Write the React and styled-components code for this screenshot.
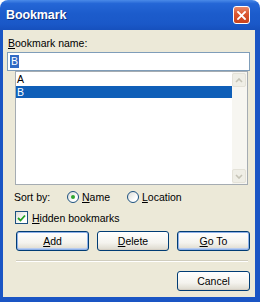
import styled, { createGlobalStyle } from "styled-components";

const GlobalStyle = createGlobalStyle`
  html, body { margin: 0; padding: 0; background: #ffffff; }
  body { font-family: "Liberation Sans", Arial, sans-serif; font-size: 10.5px; color: #000; }
`;

const Window = styled.div`
  width: 260px;
  height: 302px;
  display: flex;
  flex-direction: column;
`;

const TitleBar = styled.div`
  height: 30px;
  flex-shrink: 0;
  display: flex;
  align-items: center;
  justify-content: space-between;
  padding: 0 10px 0 6px;
  box-sizing: border-box;
  border-radius: 8px 8px 0 0;
  background: linear-gradient(180deg, #4a8ae8 0%, #2466d6 12%, #1c5ccc 45%, #1a58c8 80%, #1650bd 100%);
`;

const Title = styled.span`
  color: #fff;
  font-weight: bold;
  font-size: 12.5px;
  letter-spacing: -0.1px;
  text-shadow: 1px 1px 0 #0b2f7c;
`;

const CloseButton = styled.div`
  width: 17px;
  height: 18px;
  box-sizing: border-box;
  border: 1px solid #fff;
  border-radius: 3px;
  background: linear-gradient(180deg, #e98a6a 0%, #d9552f 45%, #c8411c 100%);
  display: flex;
  align-items: center;
  justify-content: center;
`;

const Body = styled.div`
  flex: 1;
  display: flex;
  flex-direction: column;
  background: #ece9d8;
  border-left: 3px solid #1a55c4;
  border-right: 5px solid #1a55c4;
  border-bottom: 5px solid #1a55c4;
  padding: 7px 5px 0 4px;
`;

const Label = styled.div`
  line-height: 13px;
  height: 13px;
  padding-left: 1px;
`;

const U = styled.span`
  text-decoration: underline;
  text-underline-offset: 1px;
`;

const NameInput = styled.div`
  margin-top: 2px;
  height: 19px;
  box-sizing: border-box;
  border: 1px solid #7f9db9;
  background: #fff;
  display: flex;
  align-items: center;
  padding-left: 2px;
`;

const Selected = styled.span`
  background: #316ac5;
  color: #fff;
  padding: 0 1px;
  line-height: 13px;
`;

const List = styled.div`
  margin: 0 2px 0 8px;
  height: 114px;
  box-sizing: border-box;
  border: 1px solid #a5acb2;
  background: #fff;
  display: flex;
`;

const Items = styled.div`
  flex: 1;
  padding-top: 1px;
`;

const Item = styled.div`
  height: 12px;
  line-height: 12px;
  padding-left: 1px;
  margin-bottom: 1px;
  background: ${(p) => (p.$selected ? "#0f5fb8" : "transparent")};
  color: ${(p) => (p.$selected ? "#fff" : "#000")};
`;

const ScrollBar = styled.div`
  width: 15px;
  background: #f7f6f1;
  display: flex;
  flex-direction: column;
  justify-content: space-between;
  padding: 1px 0;
  box-sizing: border-box;
`;

const ScrollArrow = styled.div`
  width: 14px;
  height: 14px;
  box-sizing: border-box;
  border: 1px solid #e4e2d8;
  border-radius: 2px;
  background: #efeee6;
  display: flex;
  align-items: center;
  justify-content: center;
`;

const SortRow = styled.div`
  margin-top: 5px;
  height: 14px;
  display: flex;
  align-items: center;
  padding-left: 7px;
`;

const SortLabel = styled.span`
  width: 53px;
`;

const Option = styled.label`
  display: flex;
  align-items: center;
  gap: 3px;
  width: ${(p) => p.$width}px;
`;

const Radio = styled.span`
  width: 12px;
  height: 12px;
  box-sizing: border-box;
  border: 1px solid #1c5180;
  border-radius: 50%;
  background: linear-gradient(135deg, #dcdcd6 0%, #fff 70%);
  display: flex;
  align-items: center;
  justify-content: center;
  &::after {
    content: "";
    width: 4px;
    height: 4px;
    border-radius: 50%;
    background: ${(p) => (p.$checked ? "#2fa62f" : "transparent")};
  }
`;

const CheckRow = styled.div`
  margin-top: 7px;
  height: 13px;
  display: flex;
  align-items: center;
  gap: 4px;
  padding-left: 8px;
`;

const CheckBox = styled.span`
  width: 13px;
  height: 13px;
  box-sizing: border-box;
  border: 1px solid #1c5180;
  background: linear-gradient(135deg, #dcdcd6 0%, #fff 70%);
  display: flex;
  align-items: center;
  justify-content: center;
`;

const ButtonRow = styled.div`
  margin-top: 7px;
  display: flex;
  gap: 8px;
  padding-left: 9px;
`;

const Button = styled.div`
  width: ${(p) => p.$width || 73}px;
  height: 20px;
  box-sizing: border-box;
  border: 1px solid #003c74;
  border-radius: 3px;
  background: linear-gradient(180deg, #ffffff 0%, #f4f3ee 60%, #dcd8cc 100%);
  box-shadow: ${(p) => (p.$default ? "inset 0 0 0 1px #8fb1e8, inset 0 -1px 0 1px #b8ccf0" : "inset 0 -1px 0 #d6d0c5")};
  display: flex;
  align-items: center;
  justify-content: center;
`;

const Separator = styled.div`
  margin: 9px 2px 0 9px;
  height: 1px;
  background: #d0cdbe;
  border-bottom: 1px solid #fff;
`;

const Footer = styled.div`
  margin-top: 9px;
  display: flex;
  justify-content: flex-end;
`;

function Chevron({ up }) {
  return (
    <svg width="8" height="5" viewBox="0 0 8 5">
      <polyline
        points={up ? "1,4 4,1 7,4" : "1,1 4,4 7,1"}
        fill="none"
        stroke="#c5c3b6"
        strokeWidth="1.6"
      />
    </svg>
  );
}

export default function App() {
  return (
    <>
      <GlobalStyle />
      <Window>
        <TitleBar>
          <Title>Bookmark</Title>
          <CloseButton>
            <svg width="9" height="9" viewBox="0 0 9 9">
              <path d="M1 1 L8 8 M8 1 L1 8" stroke="#fff" strokeWidth="1.8" strokeLinecap="square" />
            </svg>
          </CloseButton>
        </TitleBar>
        <Body>
          <Label>
            <U>B</U>ookmark name:
          </Label>
          <NameInput>
            <Selected>B</Selected>
          </NameInput>
          <List>
            <Items>
              <Item>A</Item>
              <Item $selected>B</Item>
            </Items>
            <ScrollBar>
              <ScrollArrow>
                <Chevron up />
              </ScrollArrow>
              <ScrollArrow>
                <Chevron />
              </ScrollArrow>
            </ScrollBar>
          </List>
          <SortRow>
            <SortLabel>Sort by:</SortLabel>
            <Option $width={60}>
              <Radio $checked />
              <span>
                <U>N</U>ame
              </span>
            </Option>
            <Option>
              <Radio />
              <span>
                <U>L</U>ocation
              </span>
            </Option>
          </SortRow>
          <CheckRow>
            <CheckBox>
              <svg width="9" height="8" viewBox="0 0 9 8">
                <polyline points="1,4 3.5,6.5 8,1.5" fill="none" stroke="#21a121" strokeWidth="1.8" />
              </svg>
            </CheckBox>
            <span>
              <U>H</U>idden bookmarks
            </span>
          </CheckRow>
          <ButtonRow>
            <Button $default>
              <span>
                <U>A</U>dd
              </span>
            </Button>
            <Button $width={72}>
              <span>
                <U>D</U>elete
              </span>
            </Button>
            <Button $default>
              <span>
                <U>G</U>o To
              </span>
            </Button>
          </ButtonRow>
          <Separator />
          <Footer>
            <Button>Cancel</Button>
          </Footer>
        </Body>
      </Window>
    </>
  );
}
